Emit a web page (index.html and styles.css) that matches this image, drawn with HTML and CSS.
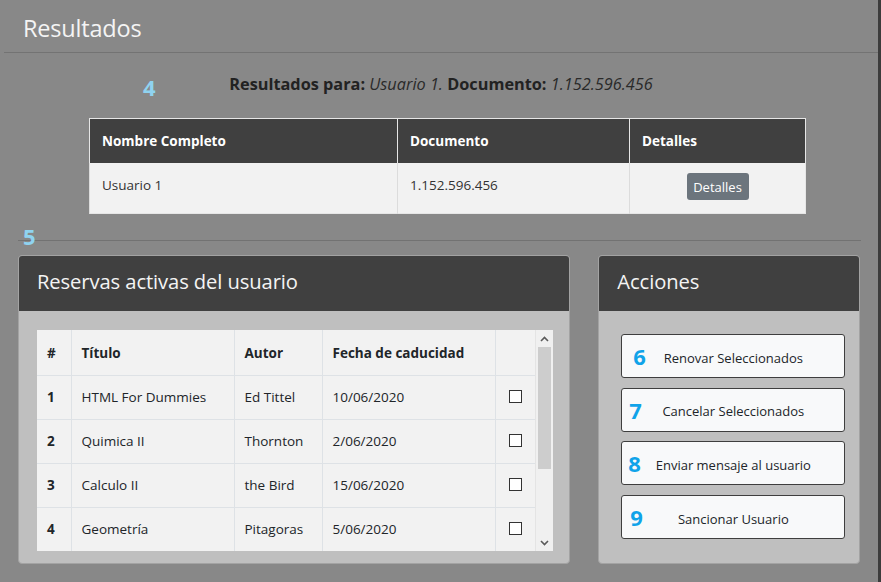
FILE: index.html
```html
<!DOCTYPE html>
<html lang="es">
<head>
<meta charset="utf-8">
<title>Resultados</title>
<link rel="stylesheet" href="styles.css">
</head>
<body>
<div class="page">
  <header class="topbar">Resultados</header>

  <section class="summary">
    <span class="tag tag-4">4</span>
    <p class="summary-text"><b>Resultados para:</b> <i>Usuario 1.</i> <b>Documento:</b> <i>1.152.596.456</i></p>
  </section>

  <table class="user-table">
    <thead>
      <tr><th class="c-name">Nombre Completo</th><th class="c-doc">Documento</th><th class="c-det">Detalles</th></tr>
    </thead>
    <tbody>
      <tr><td>Usuario 1</td><td>1.152.596.456</td><td class="center"><button class="btn-det">Detalles</button></td></tr>
    </tbody>
  </table>

  <div class="divider"><span class="tag tag-5">5</span></div>

  <div class="cards">
    <section class="card card-left">
      <h2 class="card-head">Reservas activas del usuario</h2>
      <div class="card-body">
        <div class="scroll-box">
          <div class="table-clip">
            <table class="res-table">
              <thead>
                <tr><th class="w-num">#</th><th class="w-title">Título</th><th class="w-author">Autor</th><th class="w-date">Fecha de caducidad</th><th class="w-chk"></th></tr>
              </thead>
              <tbody>
                <tr><th>1</th><td>HTML For Dummies</td><td>Ed Tittel</td><td>10/06/2020</td><td class="center"><span class="chk"></span></td></tr>
                <tr><th>2</th><td>Quimica II</td><td>Thornton</td><td>2/06/2020</td><td class="center"><span class="chk"></span></td></tr>
                <tr><th>3</th><td>Calculo II</td><td>the Bird</td><td>15/06/2020</td><td class="center"><span class="chk"></span></td></tr>
                <tr><th>4</th><td>Geometría</td><td>Pitagoras</td><td>5/06/2020</td><td class="center"><span class="chk"></span></td></tr>
                <tr class="row-hidden"><th></th><td></td><td></td><td></td><td></td></tr>
              </tbody>
            </table>
          </div>
          <div class="sbar">
            <div class="sbar-btn"><svg width="9" height="6" viewBox="0 0 9 6"><path d="M1 5 L4.5 1.5 L8 5" fill="none" stroke="#5a5a5a" stroke-width="1.6"/></svg></div>
            <div class="sbar-track"><div class="sbar-thumb"></div></div>
            <div class="sbar-btn"><svg width="9" height="6" viewBox="0 0 9 6"><path d="M1 1 L4.5 4.5 L8 1" fill="none" stroke="#5a5a5a" stroke-width="1.6"/></svg></div>
          </div>
        </div>
      </div>
    </section>

    <section class="card card-right">
      <h2 class="card-head">Acciones</h2>
      <div class="card-body actions">
        <button class="act"><span class="act-num">6</span>Renovar Seleccionados</button>
        <button class="act"><span class="act-num n7">7</span>Cancelar Seleccionados</button>
        <button class="act"><span class="act-num n8">8</span>Enviar mensaje al usuario</button>
        <button class="act"><span class="act-num n9">9</span>Sancionar Usuario</button>
      </div>
    </section>
  </div>
</div>
</body>
</html>
```
FILE: styles.css
```css
* { box-sizing: border-box; }
html, body { margin: 0; padding: 0; }
body {
  background: #888888;
  font-family: "Open Sans", "Noto Sans", sans-serif;
  color: #212529;
  width: 881px;
  height: 582px;
  overflow: hidden;
}
.page {
  height: 582px;
  margin-left: 4px;
  border-right: 3px solid #3c3c3c;
  display: flex;
  flex-direction: column;
}
.topbar {
  height: 53px;
  border-bottom: 1px solid #737373;
  padding-left: 19px;
  font-size: 23.5px;
  line-height: 56px;
  color: #f4f4f4;
  letter-spacing: -0.2px;
}
.summary {
  position: relative;
  height: 65px;
}
.summary-text {
  margin: 0;
  text-align: center;
  font-size: 16.3px;
  line-height: 20px;
  padding-top: 21px;
  color: #222;
}
.summary-text i { color: #2a2a2a; }
.tag {
  position: absolute;
  font-weight: 700;
  font-size: 22px;
  color: #8fd3f0;
  line-height: 1;
}
.tag-4 { left: 139px; top: 23px; }
.tag-5 { left: 5px; top: -16px; }

.user-table {
  margin-left: 85px;
  width: 717px;
  border-collapse: collapse;
  border: 1px solid #e6e6e6;
  font-size: 13.5px;
}
.user-table th {
  background: #404040;
  color: #fff;
  text-align: left;
  font-weight: 700;
  height: 44px;
  padding: 0 12px;
  border-left: 1px solid #e6e6e6;
}
.user-table td {
  background: #f2f2f2;
  height: 51px;
  padding: 0 12px 6px;
  color: #333;
  border-left: 1px solid #dcdcdc;
}
.c-name { width: 308px; }
.c-doc { width: 232px; }
.center { text-align: center; }
.user-table td.center { padding-bottom: 2px; padding-top: 0; }
.btn-det {
  font-family: inherit;
  font-size: 13px;
  color: #fff;
  background: #6c757d;
  border: none;
  border-radius: 3px;
  height: 27px;
  width: 62px;
  padding: 0;
}

.divider {
  position: relative;
  margin: 26px 17px 0 14px;
  border-top: 1px solid #727272;
}

.cards {
  display: flex;
  gap: 28px;
  margin: 14px 18px 0 14px;
}
.card {
  background: #bfbfbf;
  border: 1px solid #a3a3a3;
  border-radius: 4px;
  height: 309px;
  overflow: hidden;
}
.card-left { width: 553px; }
.card-right { width: 262px; }
.card-head {
  margin: 0;
  height: 55px;
  background: #404040;
  color: #f4f4f4;
  font-weight: 400;
  font-size: 20.2px;
  line-height: 50px;
  padding-left: 18px;
  letter-spacing: -0.1px;
}
.card-body { padding: 19px 18px 0 18px; }

.scroll-box {
  display: flex;
  width: 516px;
  height: 221px;
  background: #f2f2f2;
}
.table-clip {
  width: 498px;
  height: 221px;
  overflow: hidden;
}
.res-table {
  width: 498px;
  border-collapse: collapse;
  font-size: 13.5px;
  table-layout: fixed;
}
.res-table th, .res-table td {
  border: 1px solid #dee2e6;
  height: 44px;
  padding: 0 10px;
  text-align: left;
  color: #212529;
}
.res-table thead th { height: 45px; font-weight: 700; border-top: none; }
.res-table thead th { padding-top: 2px; }
.res-table tr > :first-child { border-left: none; }
.res-table tr > :last-child { border-right: none; }
.res-table tbody th { font-weight: 700; }
.res-table td.center { text-align: center; }
.w-num { width: 34px; }
.w-title { width: 163px; }
.w-author { width: 88px; }
.w-date { width: 173px; }
.w-chk { width: 40px; }
.chk {
  display: inline-block;
  width: 13px;
  height: 13px;
  border: 1px solid #333;
  background: #fff;
  vertical-align: middle;
  margin-top: -3px;
}

.sbar {
  width: 18px;
  display: flex;
  flex-direction: column;
  background: #f0f0f0;
  border-left: 1px solid #e4e4e4;
}
.sbar-btn {
  height: 17px;
  display: flex;
  align-items: center;
  justify-content: center;
}
.sbar-track { flex: 1; padding: 0 2px; }
.sbar-thumb { height: 122px; background: #cdcdcd; }

.actions {
  display: flex;
  flex-direction: column;
  gap: 9.7px;
  padding: 23px 14px 0 22px;
}
.act {
  position: relative;
  height: 44px;
  width: 224px;
  background: #f8f9fa;
  border: 1px solid #3e3e3e;
  border-radius: 3px;
  font-family: inherit;
  font-size: 13px;
  color: #212529;
  text-align: center;
  padding: 3px 0 0;
}
.act-num {
  position: absolute;
  left: 11px;
  top: 10px;
  font-size: 22px;
  font-weight: 700;
  color: #10a3e9;
  line-height: 1;
}
.n7 { left: 7px; }
.n8 { left: 6px; }
.n9 { left: 8px; }
```
